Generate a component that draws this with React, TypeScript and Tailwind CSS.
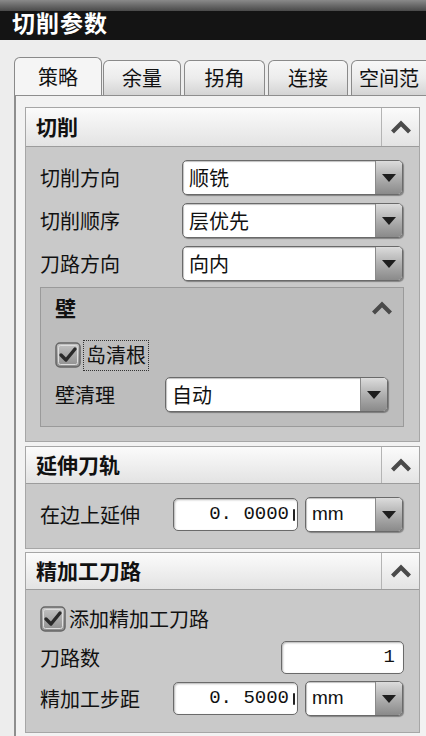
import React from "react";

const CJK = '"Noto Sans CJK SC", "Noto Sans", sans-serif';

function Chevron({ className = "" }: { className?: string }) {
  return (
    <svg width="22" height="14" viewBox="0 0 22 14" className={className}>
      <path d="M2.5 12 L11 3.5 L19.5 12" fill="none" stroke="#4a4a4a" strokeWidth="4.2" strokeLinejoin="miter" />
    </svg>
  );
}

function Arrow() {
  return (
    <svg width="16" height="10" viewBox="0 0 16 10">
      <path d="M1 1 L15 1 L8 9 Z" fill="#1e1e1e" />
    </svg>
  );
}

function Dropdown({ text, w, latin = false }: { text: string; w: string; latin?: boolean }) {
  return (
    <div
      className={`${w} h-[35px] flex rounded-[5px] border border-[#6a6a6a] bg-white overflow-hidden shadow-[1px_1px_1px_rgba(0,0,0,0.35)]`}
    >
      <div
        className="flex-1 flex items-center pl-[6px] text-[20px] text-[#111] shadow-[inset_1px_1px_1px_rgba(0,0,0,0.25)]"
        style={latin ? { fontFamily: '"Liberation Sans", Arial, sans-serif', fontSize: 19 } : undefined}
      >
        {text}
      </div>
      <div className="w-[27px] flex items-center justify-center bg-gradient-to-b from-[#dcdcdc] via-[#b0b0b0] to-[#8a8a8a] border-l border-[#8a8a8a]">
        <Arrow />
      </div>
    </div>
  );
}

function NumInput({ value, w, partial = true }: { value: string; w: string; partial?: boolean }) {
  return (
    <div
      className={`${w} h-[33px] flex items-center justify-end rounded-[5px] border border-[#6a6a6a] bg-white overflow-hidden shadow-[inset_1px_1px_2px_rgba(0,0,0,0.3)]`}
    >
      <span
        className={`text-[19px] text-[#111] whitespace-nowrap ${partial ? "mr-[4px]" : "mr-[8px]"}`}
        style={{ fontFamily: '"Liberation Mono", "DejaVu Sans Mono", monospace' }}
      >
        {value}
      </span>
      {partial && <div className="w-[2px] h-[12px] mr-[2px] bg-[#222] rounded-[1px]" />}
    </div>
  );
}

function CheckBox() {
  return (
    <svg width="26" height="26" viewBox="0 0 26 26">
      <defs>
        <linearGradient id="cbg" x1="0" y1="0" x2="0" y2="1">
          <stop offset="0" stopColor="#c4c4c4" />
          <stop offset="1" stopColor="#8e8e8e" />
        </linearGradient>
      </defs>
      <rect x="1" y="1" width="24" height="24" rx="4" fill="url(#cbg)" stroke="#666" strokeWidth="1.5" />
      <rect x="3.5" y="3.5" width="19" height="19" rx="2" fill="none" stroke="#dedede" strokeWidth="1" />
      <path d="M6 13 L11 18 L20 7" fill="none" stroke="#2a2a2a" strokeWidth="3.4" strokeLinecap="round" strokeLinejoin="round" />
    </svg>
  );
}

function SectionHeader({ title, h }: { title: string; h: string }) {
  return (
    <div className={`${h} flex bg-gradient-to-b from-[#fbfbfb] to-[#e3e3e3] border-b border-[#9c9c9c]`}>
      <div className="flex-1 flex items-center pl-[10px] text-[21px] font-bold text-[#111]">{title}</div>
      <div className="w-[38px] flex items-center justify-center border-l border-[#b4b4b4]">
        <Chevron />
      </div>
    </div>
  );
}

function Label({ children, w }: { children: React.ReactNode; w: string }) {
  return <div className={`${w} shrink-0 text-[20px] text-[#111] leading-none`}>{children}</div>;
}

export default function App() {
  const tabs = [
    { t: "余量", cls: "w-[78px] ml-[1px]" },
    { t: "拐角", cls: "w-[81px] ml-[3px]" },
    { t: "连接", cls: "w-[80px] ml-[3px]" },
    { t: "空间范", cls: "w-[100px] ml-[3px] justify-start pl-[7px]" },
  ];
  return (
    <div className="relative w-[426px] h-[736px] overflow-hidden bg-[#ededed] flex flex-col" style={{ fontFamily: CJK }}>
      {/* Title bar */}
      <div className="h-[40px] flex flex-col shrink-0">
        <div className="h-[11px] bg-gradient-to-b from-[#8a8a8a] to-[#4a4a4a]" />
        <div className="flex-1 bg-[#141414]" />
      </div>
      <div className="absolute top-[6px] left-[12px] text-[23px] font-bold text-white tracking-[1px] leading-[32px]">切削参数</div>

      {/* Tabs */}
      <div className="h-[17px] shrink-0" />
      <div className="h-[38px] shrink-0 flex items-end pl-[14px] whitespace-nowrap overflow-hidden">
        <div className="w-[88px] shrink-0 h-[39px] mb-[-1px] relative z-10 flex items-center justify-center rounded-t-[6px] border border-b-0 border-[#8a8a8a] bg-[#f5f5f5] text-[20px] text-[#111]">
          策略
        </div>
        {tabs.map((tb) => (
          <div
            key={tb.t}
            className={`${tb.cls} shrink-0 h-[35px] flex items-center justify-center rounded-t-[6px] border border-b-0 border-[#8a8a8a] bg-gradient-to-b from-[#f7f7f7] via-[#ececec] to-[#d4d4d4] text-[20px] text-[#111] overflow-hidden`}
          >
            {tb.t}
          </div>
        ))}
      </div>

      {/* Pane */}
      <div className="flex-1 ml-[14px] border-l-2 border-t border-[#8e8e8e] bg-[#f2f2f2] pl-[9px] pt-[11px] pr-[6px] flex flex-col">
        {/* Section 1 */}
        <div className="border border-[#a6a6a6] flex flex-col">
          <SectionHeader title="切削" h="h-[39px]" />
          <div className="bg-[#c9c9c9] pt-[13px] pb-[14px] pl-[14px] pr-[15px] flex flex-col gap-[8px]">
            {[
              ["切削方向", "顺铣"],
              ["切削顺序", "层优先"],
              ["刀路方向", "向内"],
            ].map(([l, v]) => (
              <div key={l} className="flex items-center">
                <Label w="w-[142px]">{l}</Label>
                <Dropdown text={v} w="w-[221px]" />
              </div>
            ))}
            {/* Wall */}
            <div className="mt-[-2px] border border-[#9a9a9a] bg-[#bdbdbd] flex flex-col pl-[14px] pr-[15px] pb-[14px]">
              <div className="h-[40px] flex items-center justify-between">
                <div className="text-[21px] font-bold text-[#111]">壁</div>
                <Chevron className="mr-[-5px]" />
              </div>
              <div className="h-[34px] mt-[10px] flex items-center">
                <CheckBox />
                <div className="ml-[2px] px-[2px] h-[31px] flex items-center border border-dotted border-[#333] text-[20px] text-[#111]">
                  岛清根
                </div>
              </div>
              <div className="mt-[5px] flex items-center">
                <Label w="w-[110px]">壁清理</Label>
                <Dropdown text="自动" w="w-[223px]" />
              </div>
            </div>
          </div>
        </div>

        {/* Section 2 */}
        <div className="mt-[4px] border border-[#a6a6a6] flex flex-col">
          <SectionHeader title="延伸刀轨" h="h-[37px]" />
          <div className="bg-[#c9c9c9] pt-[13px] pb-[16px] pl-[14px] pr-[15px] flex items-center">
            <Label w="w-[133px]">在边上延伸</Label>
            <NumInput value="0. 0000" w="w-[125px]" />
            <div className="ml-[7px]">
              <Dropdown text="mm" w="w-[98px]" latin />
            </div>
          </div>
        </div>

        {/* Section 3 */}
        <div className="mt-[3px] border border-[#a6a6a6] flex flex-col">
          <SectionHeader title="精加工刀路" h="h-[37px]" />
          <div className="bg-[#c9c9c9] pt-[14px] pb-[16px] pl-[14px] pr-[15px] flex flex-col">
            <div className="h-[30px] flex items-center">
              <CheckBox />
              <div className="ml-[3px] text-[20px] text-[#111]">添加精加工刀路</div>
            </div>
            <div className="mt-[7px] flex items-center justify-between">
              <Label w="w-[120px]">刀路数</Label>
              <NumInput value="1" w="w-[123px]" partial={false} />
            </div>
            <div className="mt-[7px] flex items-center">
              <Label w="w-[133px]">精加工步距</Label>
              <NumInput value="0. 5000" w="w-[125px]" />
              <div className="ml-[7px]">
                <Dropdown text="mm" w="w-[98px]" latin />
              </div>
            </div>
          </div>
        </div>
      </div>
    </div>
  );
}
